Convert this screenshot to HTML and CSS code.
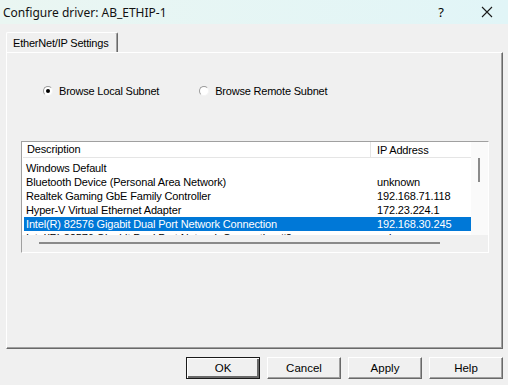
FILE: index.html
```html
<!DOCTYPE html>
<html lang="en">
<head>
    <meta charset="UTF-8">
    <title>Configure driver</title>
    <link rel="stylesheet" href="styles.css">
</head>
<body>
    <div class="window">
        <!-- barra de titulo -->
        <div class="titlebar">
            <span class="title">Configure driver: AB_ETHIP-1</span>
            <span class="tb-help">?</span>
            <span class="tb-close">
                <svg width="12" height="12" viewBox="0 0 12 12"><path d="M1 1 L11 11 M11 1 L1 11" stroke="#1a1a1a" stroke-width="1.1" fill="none"/></svg>
            </span>
        </div>

        <div class="tabs">
            <div class="tab">EtherNet/IP Settings</div>
        </div>

        <div class="panel">
            <div class="radios">
                <label class="radio"><span class="dot checked"></span>Browse Local Subnet</label>
                <label class="radio"><span class="dot"></span>Browse Remote Subnet</label>
            </div>

            <div class="listbox">
                <div class="list-content">
                    <div class="list-header">
                        <div class="col-desc">Description</div>
                        <div class="col-ip">IP Address</div>
                    </div>
                    <div class="rows">
                        <div class="row"><div class="col-desc">Windows Default</div><div class="col-ip"></div></div>
                        <div class="row"><div class="col-desc">Bluetooth Device (Personal Area Network)</div><div class="col-ip">unknown</div></div>
                        <div class="row"><div class="col-desc">Realtek Gaming GbE Family Controller</div><div class="col-ip">192.168.71.118</div></div>
                        <div class="row"><div class="col-desc">Hyper-V Virtual Ethernet Adapter</div><div class="col-ip">172.23.224.1</div></div>
                        <div class="row selected"><div class="col-desc">Intel(R) 82576 Gigabit Dual Port Network Connection</div><div class="col-ip">192.168.30.245</div></div>
                        <div class="row"><div class="col-desc">Intel(R) 82576 Gigabit Dual Port Network Connection #2</div><div class="col-ip">unknown</div></div>
                    </div>
                </div>
                <div class="vscroll"><div class="vthumb"></div></div>
                <div class="hscroll"><div class="hthumb"></div></div>
                <div class="corner"></div>
            </div>
        </div>

        <div class="buttons">
            <button class="btn default">OK</button>
            <button class="btn">Cancel</button>
            <button class="btn">Apply</button>
            <button class="btn">Help</button>
        </div>
    </div>
</body>
</html>
```

FILE: styles.css
```css
body {
    margin: 0;
    background-color: #f0f0f0;
    font-family: "Liberation Sans", Arial, sans-serif;
    font-size: 11px;
    letter-spacing: -0.15px;
    color: #000;
}
.window {
    width: 508px;
    height: 385px;
    overflow: hidden;
}
.titlebar {
    height: 24px;
    display: flex;
    align-items: center;
    background: linear-gradient(to right, #eaf6f2, #e1f5f7);
    letter-spacing: 0;
}
.title {
    font-family: "Noto Sans", sans-serif;
    font-size: 12px;
    padding-left: 3px;
    flex: 1;
    color: #111;
}
.tb-help {
    font-family: "Noto Sans", sans-serif;
    font-size: 13px;
    width: 46px;
    text-align: center;
}
.tb-close {
    width: 46px;
    display: flex;
    justify-content: center;
    margin-right: -2px;
}
.tabs {
    padding-left: 6px;
    margin-top: 8px;
    height: 20px;
    display: flex;
    position: relative;
    z-index: 1;
}
.tab {
    width: 112px;
    height: 20px;
    box-sizing: border-box;
    border-top: 1px solid #fff;
    border-left: 1px solid #fff;
    border-right: 1px solid #696969;
    box-shadow: inset -1px 0 #a0a0a0;
    border-radius: 2px 2px 0 0;
    background: #f0f0f0;
    padding: 4px 0 0 6px;
    white-space: nowrap;
    letter-spacing: -0.2px;
}
.panel {
    margin-left: 6px;
    width: 497px;
    height: 297px;
    box-sizing: border-box;
    border-top: 1px solid #fff;
    border-left: 1px solid #fff;
    border-right: 1px solid #696969;
    border-bottom: 1px solid #696969;
    box-shadow: inset -1px -1px #a0a0a0;
    padding: 31px 0 0 14px;
}
.radios {
    display: flex;
    height: 14px;
    align-items: center;
    padding-left: 22px;
}
.radio {
    display: flex;
    align-items: center;
    letter-spacing: -0.2px;
}
.radio + .radio {
    margin-left: 40px;
}
.dot {
    width: 10px;
    height: 10px;
    box-sizing: border-box;
    border-radius: 50%;
    border: 1px solid;
    border-color: #9a9a9a #f4f4f4 #f4f4f4 #9a9a9a;
    background: #fff;
    margin-right: 6px;
    display: flex;
    align-items: center;
    justify-content: center;
}
.dot.checked::after {
    content: "";
    width: 4px;
    height: 4px;
    border-radius: 50%;
    background: #000;
}
.listbox {
    margin-top: 43px;
    width: 468px;
    height: 112px;
    box-sizing: border-box;
    border: 1px solid;
    border-color: #a0a0a0 #fff #fff #a0a0a0;
    box-shadow: inset 1px 1px #696969;
    display: grid;
    grid-template-columns: 449px 17px;
    grid-template-rows: 93px 17px;
}
.list-content {
    background: #fff;
    overflow: hidden;
    padding-left: 1px;
}
.list-header {
    display: flex;
    height: 15px;
    border-bottom: 1px solid #e5e5e5;
    align-items: center;
}
.list-header .col-desc {
    width: 348px;
    border-right: 1px solid #e5e5e5;
    height: 15px;
    line-height: 15px;
}
.col-desc {
    box-sizing: border-box;
    width: 346px;
    padding-left: 4px;
    white-space: nowrap;
    overflow: hidden;
}
.col-ip {
    padding-left: 6px;
    white-space: nowrap;
}
.rows {
    padding-top: 3px;
}
.row {
    display: flex;
    height: 14px;
    line-height: 14px;
    margin-left: 1px;
    width: 447px;
}
.row .col-desc {
    padding-left: 2px;
}
.row .col-ip {
    padding-left: 7px;
}
.row.selected {
    background: #0078d7;
    color: #fff;
}
.vscroll {
    background: #fafafa;
    position: relative;
}
.vthumb {
    position: absolute;
    left: 7px;
    top: 16px;
    width: 2px;
    height: 24px;
    background: #8a8a8a;
}
.hscroll {
    background: #f0f0f0;
    position: relative;
}
.hthumb {
    position: absolute;
    left: 17px;
    top: 7px;
    width: 401px;
    height: 2px;
    background: #8a8a8a;
}
.corner {
    background: #f0f0f0;
}
.buttons {
    display: flex;
    justify-content: flex-end;
    gap: 7px;
    padding: 8px 5px 0 0;
}
.btn {
    width: 74px;
    height: 22px;
    font-family: "Liberation Sans", Arial, sans-serif;
    font-size: 11.5px;
    background: #f0f0f0;
    border: 1px solid;
    border-color: #fff #696969 #696969 #fff;
    box-shadow: inset -1px -1px #a0a0a0;
    padding: 0;
    color: #000;
}
.btn.default {
    border: 1px solid #1a1a1a;
    box-shadow: inset 1px 1px #fff, inset -2px -2px #696969;
}
```
